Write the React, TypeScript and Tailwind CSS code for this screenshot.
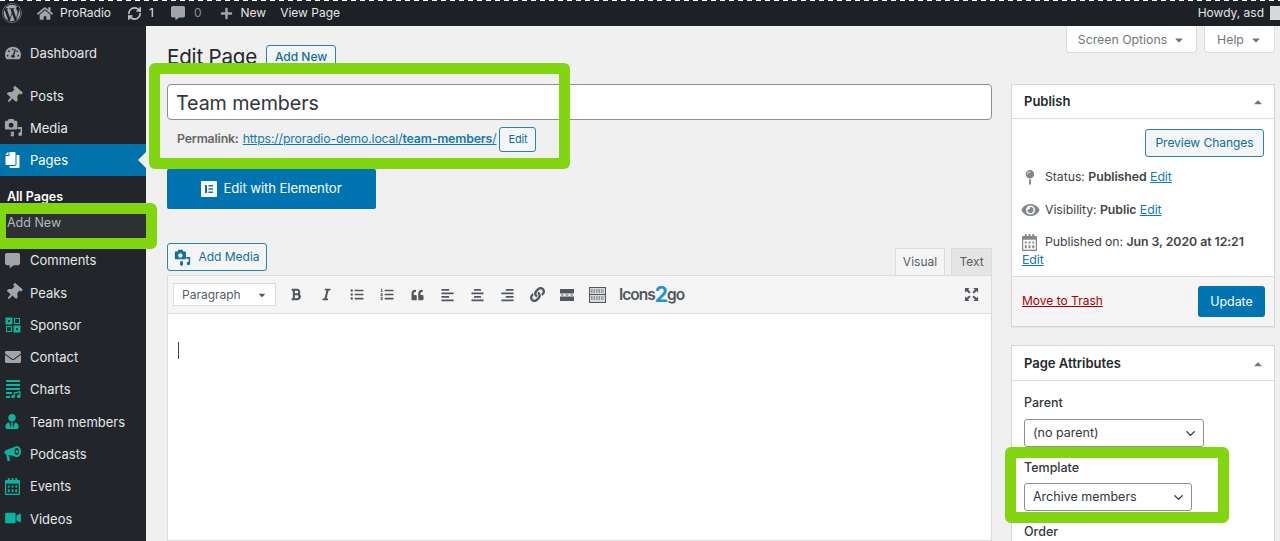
import React from "react";
import {
  FaWordpress, FaHome, FaCommentAlt, FaPlus, FaTachometerAlt, FaThumbtack, FaEnvelope, FaUserTie,
  FaVideo, FaBold, FaItalic, FaListUl, FaListOl, FaQuoteLeft,
  FaAlignLeft, FaAlignCenter, FaAlignRight, FaLink, FaEye, FaMapPin, FaCaretDown, FaCaretUp, FaCopy,
} from "react-icons/fa";
import { LuRefreshCw, LuChevronDown } from "react-icons/lu";

const font = "font-['Inter','Liberation_Sans',sans-serif]";

function MediaIcon({ className }: { className?: string }) {
  return (
    <svg viewBox="0 0 20 20" className={className} fill="currentColor">
      <path fillRule="evenodd" d="M2 3h2l1-2h5l1 2h2a1 1 0 0 1 1 1v7a1 1 0 0 1-1 1H2a1 1 0 0 1-1-1V4a1 1 0 0 1 1-1zm5.500 2a2.600 2.600 0 1 0 0 5.200a2.600 2.600 0 0 0 0-5.200z" />
      <path d="M14.500 9.500h4.500v7.500a2 2 0 1 1-1.700-2v-3.500h-2.800zM7 14.500h3.500v3.300a1.800 1.800 0 1 1-1.700-1.800v-.2H7z" />
    </svg>
  );
}

function SponsorIcon({ className }: { className?: string }) {
  return (
    <svg viewBox="0 0 16 16" className={className} fill="none" stroke="currentColor" strokeWidth="1">
      <rect x="1" y="1" width="6" height="6" fill="currentColor" />
      <rect x="9.500" y="1.500" width="5" height="5" />
      <rect x="1.500" y="9.500" width="5" height="5" />
      <rect x="9" y="9" width="6" height="6" fill="currentColor" />
      <path d="M3 3h2v2H3zM11 11h2v2h-2z" fill="#22262b" stroke="none" />
    </svg>
  );
}

function ChartsIcon({ className }: { className?: string }) {
  return (
    <svg viewBox="0 0 16 18" className={className} fill="currentColor">
      <path d="M1 0h14v2H1zM1 4h14v2H1zM1 8h14v2H1zM1 12h6v2H1zM1 16h4v2H1z" />
      <path d="M8.500 12.500L15.500 11v5.500a1.700 1.700 0 1 1-1.300-1.600v-2.300l-4.400 1v3a1.700 1.700 0 1 1-1.300-1.600z" />
    </svg>
  );
}

function MegaphoneIcon({ className }: { className?: string }) {
  return (
    <svg viewBox="0 0 18 18" className={className} fill="currentColor">
      <path fillRule="evenodd" d="M13.500 1a4.500 6 0 0 1 0 12c-.6 0-1.300-.3-2-.9L5.500 10.500H4.800l1.500 5.500c.1.500-.2 1-.7 1H4.300c-.4 0-.7-.2-.8-.6L2.500 10.300C1.300 10 .5 9.200.5 8s.8-2.500 2-2.700l9-3.500C12 1.300 12.800 1 13.500 1zm0 2.300a2.300 3.700 0 1 0 0 7.400a2.300 3.700 0 0 0 0-7.400z" />
      <circle cx="13.800" cy="7" r="1.500" />
    </svg>
  );
}

function CalendarIcon({ className, hole = "#22262b" }: { className?: string; hole?: string }) {
  return (
    <svg viewBox="0 0 16 18" className={className} fill="currentColor">
      <path d="M3 0h2v3H3zM11 0h2v3h-2zM7 0h2v3H7z" />
      <path d="M1 2h14a1 1 0 0 1 1 1v14a1 1 0 0 1-1 1H1a1 1 0 0 1-1-1V3a1 1 0 0 1 1-1z" />
      <path fill={hole} d="M1.300 6h13.400v10.700H1.300z" />
      <path d="M3 8h2v2H3zM7 8h2v2H7zM11 8h2v2h-2zM3 12h2v3H3zM7 12h2v3H7zM11 12h2v3h-2z" />
    </svg>
  );
}

function MoreIcon() {
  return (
    <svg viewBox="0 0 14 12" className="w-[14px] h-[12px]" fill="currentColor">
      <path d="M0 0h14v4.500H0zM0 7.500h14V12H0zM1 5.500h2.500v1H1zM5.500 5.500h3v1h-3zM10.500 5.500H13v1h-2.500z" />
    </svg>
  );
}

function KitchenIcon() {
  return (
    <svg viewBox="0 0 17 16" className="w-[17px] h-[16px]" fill="none" stroke="currentColor" strokeWidth="1">
      <rect x="0.500" y="0.500" width="16" height="15" fill="#d9d9d9" />
      <path d="M2 3h13M2 5h13M2 10h13M2 12h13" strokeDasharray="1.500 1" />
      <path d="M0 7.500h17" />
    </svg>
  );
}

function FullscreenIcon() {
  return (
    <svg viewBox="0 0 16 16" className="w-[15px] h-[15px]" fill="currentColor">
      <path d="M1 1h5L4.300 2.700 7 5.500 5.500 7 2.700 4.300 1 6zM15 1v5l-1.700-1.700L10.500 7 9 5.500l2.700-2.800L10 1zM1 15v-5l1.700 1.700L5.500 9 7 10.500l-2.700 2.800L6 15zM15 15h-5l1.700-1.700L9 10.500 10.500 9l2.800 2.700L15 10z" />
    </svg>
  );
}

function ElementorIcon() {
  return (
    <svg viewBox="0 0 16 16" className="w-4 h-4">
      <rect width="16" height="16" rx="1" fill="#fff" />
      <path d="M4 4h2v8H4zM7.500 4H12v1.600H7.500zM7.500 7.200H12v1.600H7.500zM7.500 10.400H12V12H7.500z" fill="#0073b1" />
    </svg>
  );
}

type Item = { label: string; icon: React.ReactNode };

const gray = "text-[#a0a5aa]";
const teal = "text-[#0ab5a0]";

const group1: Item[] = [
  { label: "Posts", icon: <FaThumbtack className={`w-[17px] h-[17px] ${gray} rotate-[40deg]`} /> },
  { label: "Media", icon: <MediaIcon className={`w-[19px] h-[19px] -ml-[1px] ${gray}`} /> },
];

const group2: Item[] = [
  { label: "Comments", icon: <FaCommentAlt className={`w-[15px] h-[15px] ${gray}`} /> },
  { label: "Peaks", icon: <FaThumbtack className={`w-[17px] h-[17px] ${gray} rotate-[40deg]`} /> },
  { label: "Sponsor", icon: <SponsorIcon className={`w-[16px] h-[16px] ${teal}`} /> },
  { label: "Contact", icon: <FaEnvelope className={`w-[16px] h-[16px] ${gray}`} /> },
  { label: "Charts", icon: <ChartsIcon className={`w-[16px] h-[18px] ${teal}`} /> },
  { label: "Team members", icon: <FaUserTie className={`w-[14px] h-[15px] ${teal}`} /> },
  { label: "Podcasts", icon: <MegaphoneIcon className={`w-[17px] h-[17px] -ml-[1px] ${teal}`} /> },
  { label: "Events", icon: <CalendarIcon className={`w-[15px] h-[17px] ${teal}`} /> },
  { label: "Videos", icon: <FaVideo className={`w-[16px] h-[14px] ${teal}`} /> },
];

function MenuRow({ item }: { item: Item }) {
  return (
    <div className="h-[32.3px] flex items-center">
      <span className="w-[30px] pl-[5px] flex justify-start items-center">{item.icon}</span>
      <span className="pt-[2px] text-[13px] text-[#e6e7e8]">{item.label}</span>
    </div>
  );
}

function Sidebar() {
  return (
    <aside className="w-[146px] shrink-0 bg-[#22262b] pt-[11px]">
      <MenuRow item={{ label: "Dashboard", icon: <FaTachometerAlt className={`w-[16px] h-[16px] ${gray}`} /> }} />
      <div className="h-[10px]" />
      {group1.map((i) => <MenuRow key={i.label} item={i} />)}
      <div className="h-[32px] bg-[#0073aa] flex items-center relative">
        <span className="w-[30px] pl-[5px] flex items-center"><FaCopy className="w-[15px] h-[16px] text-white -scale-x-100" /></span>
        <span className="pt-[2px] text-[13px] text-white">Pages</span>
        <span className="absolute right-0 top-[8px] w-0 h-0 border-y-[8px] border-y-transparent border-r-[8px] border-r-[#f0f0f0]" />
      </div>
      <div className="h-[68px] pt-[13px] text-[12.500px]">
        <div className="pl-[7px] font-semibold text-white leading-[16px]">All Pages</div>
        <div className="pl-[7px] pt-px mt-[9px] h-[24px] bg-[#2d3035] text-[#b4b9be] leading-[16px]">Add New</div>
      </div>
      {group2.map((i) => <MenuRow key={i.label} item={i} />)}
    </aside>
  );
}

function TopBar() {
  return (
    <header className="h-[26px] shrink-0 bg-[#1d2025] flex items-center text-[12px] text-[#e4e5e6] relative">
      <div className="absolute left-0 right-0 top-0 h-[1px] bg-[repeating-linear-gradient(90deg,#ffffff_0,#ffffff_5px,transparent_5px,transparent_9px)]" />
      <FaWordpress className="w-[20px] h-[20px] text-[#a0a5aa] ml-[2px]" />
      <FaHome className="w-[16px] h-[15px] text-[#a0a5aa] ml-[15px]" />
      <span className="ml-[7px]">ProRadio</span>
      <LuRefreshCw className="w-[15px] h-[15px] text-[#c5c8cb] ml-[16px]" strokeWidth={2.6} />
      <span className="ml-[7px]">1</span>
      <FaCommentAlt className="w-[14px] h-[14px] text-[#a0a5aa] ml-[17px]" />
      <span className="ml-[9px] text-[#8c9095]">0</span>
      <FaPlus className="w-[13px] h-[13px] text-[#a0a5aa] ml-[18px]" />
      <span className="ml-[8px]">New</span>
      <span className="ml-[14px]">View Page</span>
      <span className="ml-auto mr-[6px]">Howdy, asd</span>
      <span className="w-[10px] h-[14px] bg-[#d8d8d8]" />
    </header>
  );
}

function OutlineBtn({ children, cls }: { children: React.ReactNode; cls: string }) {
  return (
    <div className={`border border-[#2b83ad] rounded-[3px] text-[#0f6f9f] flex items-center justify-center ${cls}`}>{children}</div>
  );
}

function ToolIcon({ children, cls }: { children: React.ReactNode; cls: string }) {
  return <span className={`flex justify-center items-center text-[#50575e] ${cls}`}>{children}</span>;
}

function Editor() {
  return (
    <div className="flex-1 flex flex-col">
      <div className="flex items-end justify-between h-[32px]">
        <OutlineBtn cls="w-[100px] h-[28px] text-[12px] gap-[7px] bg-[#f3f5f6] self-start">
          <MediaIcon className="w-[17px] h-[17px]" />
          <span>Add Media</span>
        </OutlineBtn>
        <div className="flex items-end gap-[6px] text-[12px]">
          <div className="w-[50px] h-[27px] bg-[#f5f5f5] border border-b-0 border-[#dcdcde] flex items-center justify-center text-[#555d66]">Visual</div>
          <div className="w-[41px] h-[27px] bg-[#e5e5e5] border border-b-0 border-[#dcdcde] flex items-center justify-center text-[#555d66]">Text</div>
        </div>
      </div>
      <div className="flex-1 border border-[#dcdcde] bg-white flex flex-col">
        <div className="h-[38px] bg-[#f5f5f5] border-b border-[#dcdcde] flex items-center pl-[5px] pr-[12px]">
          <div className="w-[103px] h-[23px] bg-white border border-[#dddddd] flex items-center justify-between px-[8px] text-[12px] text-[#555d66]">
            <span>Paragraph</span>
            <FaCaretDown className="w-[10px] h-[10px] text-[#50575e]" />
          </div>
          <ToolIcon cls="w-[30px] ml-[5px]"><FaBold className="w-[12px] h-[13px]" /></ToolIcon>
          <ToolIcon cls="w-[30px]"><FaItalic className="w-[11px] h-[13px]" /></ToolIcon>
          <ToolIcon cls="w-[30px] ml-px"><FaListUl className="w-[14px] h-[13px]" /></ToolIcon>
          <ToolIcon cls="w-[30px]"><FaListOl className="w-[14px] h-[13px]" /></ToolIcon>
          <ToolIcon cls="w-[30px]"><FaQuoteLeft className="w-[15px] h-[12px]" /></ToolIcon>
          <ToolIcon cls="w-[30px]"><FaAlignLeft className="w-[15px] h-[14px]" /></ToolIcon>
          <ToolIcon cls="w-[30px]"><FaAlignCenter className="w-[15px] h-[14px]" /></ToolIcon>
          <ToolIcon cls="w-[30px]"><FaAlignRight className="w-[15px] h-[14px]" /></ToolIcon>
          <ToolIcon cls="w-[30px]"><FaLink className="w-[15px] h-[15px]" /></ToolIcon>
          <ToolIcon cls="w-[30px]"><MoreIcon /></ToolIcon>
          <ToolIcon cls="w-[30px]"><KitchenIcon /></ToolIcon>
          <span className="ml-[7px] text-[15.500px] font-semibold tracking-[-1px] text-[#50575e] flex items-center">
            Icons<span className="text-[#2196d3] text-[21px] font-bold leading-none">2</span>go
          </span>
          <ToolIcon cls="ml-auto"><FullscreenIcon /></ToolIcon>
        </div>
        <div className="pt-[28px] pl-[10px]">
          <div className="w-px h-[17px] bg-[#444]" />
        </div>
      </div>
    </div>
  );
}

function LeftColumn() {
  return (
    <section className="w-[825px] flex flex-col">
      <div className="flex items-center h-[28px] mt-[17px]">
        <h1 className="text-[20.600px] text-[#23282d] tracking-[-0.2px] leading-none">Edit Page</h1>
        <OutlineBtn cls="ml-[9px] w-[70px] h-[25px] text-[12px] font-medium bg-[#f3f5f6]">Add New</OutlineBtn>
      </div>
      <div className="mt-[13px] h-[36px] border border-[#8c8f94] rounded-[4px] bg-white flex items-center pl-[8px] pt-[3px] text-[19.700px] tracking-[-0.1px] text-[#32373c]">
        Team members
      </div>
      <div className="mt-[7px] h-[25px] flex items-center pl-[10px] text-[12.300px] tracking-[-0.15px] text-[#666]">
        <b className="font-semibold">Permalink:</b>
        <span className="ml-[4px] underline text-[#0f7bb0]">https://proradio-demo.local/<b className="font-semibold">team-members</b>/</span>
        <OutlineBtn cls="ml-[3px] w-[37px] h-[25px] text-[11px] bg-[#f3f5f6]">Edit</OutlineBtn>
      </div>
      <div className="mt-[17px] w-[209px] h-[40px] pb-[1px] bg-[#0073b1] rounded-[2px] flex items-center justify-center gap-[6px] text-white text-[13.200px] tracking-[-0.1px]">
        <ElementorIcon />
        <span>Edit with Elementor</span>
      </div>
      <div className="mt-[34px] flex-1 flex flex-col">
        <Editor />
      </div>
    </section>
  );
}

function BoxHeader({ title, h, cls = "" }: { title: string; h: string; cls?: string }) {
  return (
    <div className={`${h} ${cls} shrink-0 border-b border-[#dcdcde] flex items-center justify-between pl-[12px] pr-[10px] text-[13px] font-semibold text-[#23282d]`}>
      <span>{title}</span>
      <FaCaretUp className="w-[12px] h-[12px] text-[#72777c]" />
    </div>
  );
}

function SelectBox({ label, w }: { label: string; w: string }) {
  return (
    <div className={`${w} h-[28px] bg-white border border-[#8c8f94] rounded-[3px] flex items-center justify-between pl-[8px] pr-[5px] text-[12.500px] font-normal text-[#32373c]`}>
      <span>{label}</span>
      <LuChevronDown className="w-[15px] h-[15px] text-[#32373c]" strokeWidth={2.2} />
    </div>
  );
}

function RightColumn() {
  return (
    <section className="w-[264px] ml-[19px] flex flex-col">
      <div className="flex justify-end gap-[7px] text-[12.300px] text-[#72777c] h-[27px] shrink-0">
        <div className="w-[131px] pt-[2px] bg-white border border-t-0 border-[#dcdcde] rounded-b-[4px] flex items-center justify-center gap-[6px]">
          Screen Options <FaCaretDown className="w-[12px] h-[12px] text-[#72777c]" />
        </div>
        <div className="w-[71px] pt-[2px] bg-white border border-t-0 border-[#dcdcde] rounded-b-[4px] flex items-center justify-center gap-[6px]">
          Help <FaCaretDown className="w-[12px] h-[12px] text-[#72777c]" />
        </div>
      </div>
      <div className="mt-[31px] h-[243px] shrink-0 bg-white border border-[#d4d6d8] shadow-[0_1px_1px_rgba(0,0,0,0.04)] flex flex-col">
        <BoxHeader title="Publish" h="h-[34px]" />
        <div className="flex-1 pt-[10px] px-[10px] text-[12.300px] tracking-[-0.05px] text-[#444]">
          <div className="flex justify-end">
            <OutlineBtn cls="w-[119px] h-[28px] pb-px bg-[#f3f5f6] text-[12px]">Preview Changes</OutlineBtn>
          </div>
          <div className="flex items-center mt-[11px] h-[18px]">
            <FaMapPin className="w-[12px] h-[15px] text-[#82878c] ml-[2px]" />
            <span className="ml-[9px]">Status: <b className="font-semibold">Published</b> <span className="text-[#0f7bb0] underline">Edit</span></span>
          </div>
          <div className="flex items-center mt-[15px] h-[18px]">
            <FaEye className="w-[19px] h-[16px] text-[#82878c] -ml-[1px]" />
            <span className="ml-[5px]">Visibility: <b className="font-semibold">Public</b> <span className="text-[#0f7bb0] underline">Edit</span></span>
          </div>
          <div className="flex items-center mt-[14px] h-[18px]">
            <CalendarIcon className="w-[15px] h-[17px] text-[#82878c]" hole="#ffffff" />
            <span className="ml-[8px] whitespace-nowrap">Published on: <b className="font-semibold">Jun 3, 2020 at 12:21</b></span>
          </div>
          <div className="text-[#0f7bb0] underline leading-[18px]">Edit</div>
        </div>
        <div className="h-[50px] shrink-0 bg-[#f5f5f5] border-t border-[#dcdcde] flex items-center justify-between pl-[10px] pr-[9px]">
          <span className="text-[12px] pb-[2px] text-[#a00] underline">Move to Trash</span>
          <div className="w-[67px] h-[31px] pt-px bg-[#0073b1] rounded-[3px] text-white text-[12.400px] flex items-center justify-center">Update</div>
        </div>
      </div>
      <div className="mt-[18px] flex-1 bg-white border border-[#d4d6d8] border-b-0 flex flex-col">
        <BoxHeader title="Page Attributes" h="h-[35px]" cls="pt-[2px]" />
        <div className="pl-[12px] pt-[13px] text-[12.500px] font-medium text-[#32373c]">
          <div className="leading-[18px]">Parent</div>
          <div className="mt-[7px]"><SelectBox label="(no parent)" w="w-[180px]" /></div>
          <div className="mt-[12px] leading-[18px]">Template</div>
          <div className="mt-[6px]"><SelectBox label="Archive members" w="w-[168px]" /></div>
          <div className="mt-[12px] leading-[18px]">Order</div>
        </div>
      </div>
    </section>
  );
}

export default function App() {
  return (
    <div className={`w-[1280px] h-[541px] relative overflow-hidden flex flex-col bg-[#f0f0f0] ${font} antialiased`}>
      <TopBar />
      <div className="flex-1 min-h-0 flex">
        <Sidebar />
        <main className="flex-1 min-w-0 flex pl-[21px] overflow-hidden">
          <LeftColumn />
          <RightColumn />
        </main>
      </div>
      <div className="absolute left-[149px] top-[63px] w-[421px] h-[106px] border-[11px] border-[#82d60f] rounded-[6px]" />
      <div className="absolute -left-[5px] top-[203px] w-[162px] h-[46px] border-[11px] border-[#82d60f] rounded-[6px]" />
      <div className="absolute left-[1005px] top-[447px] w-[224px] h-[76px] border-[11px] border-[#82d60f] rounded-[6px]" />
    </div>
  );
}
